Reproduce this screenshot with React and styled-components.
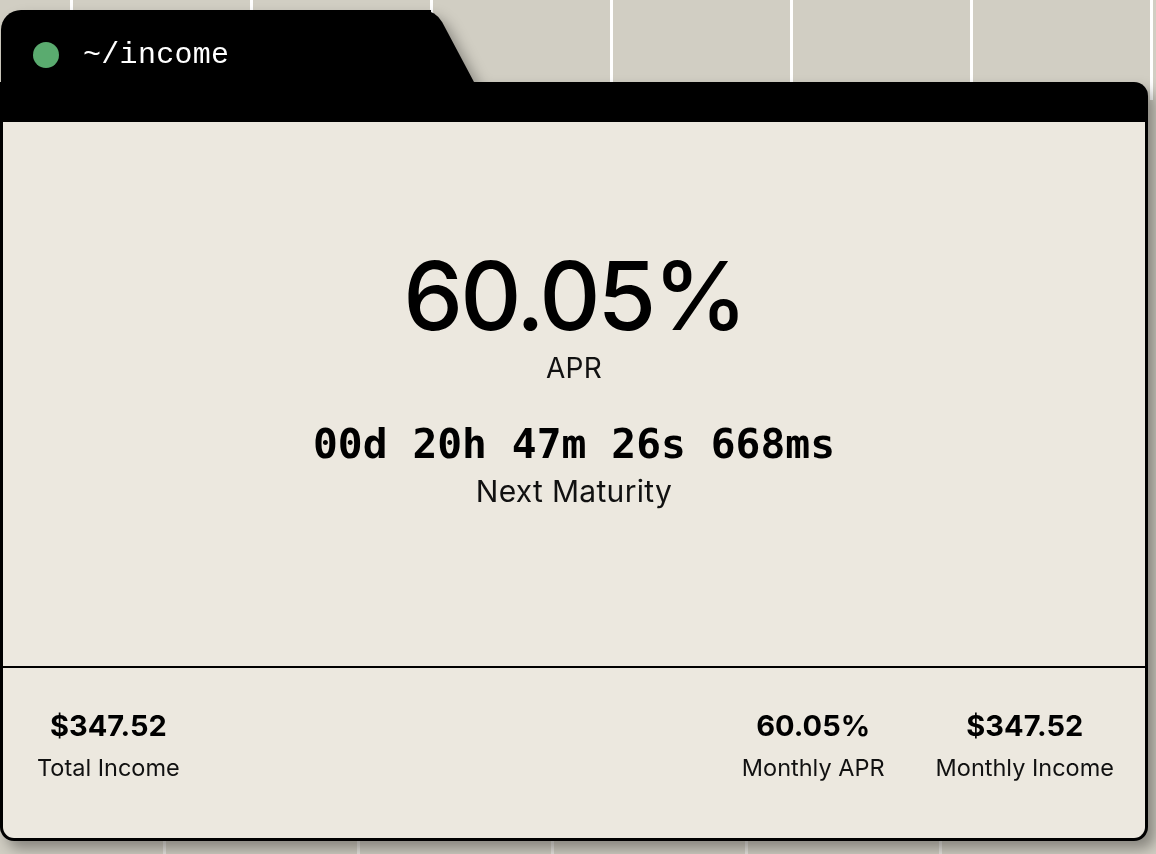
import React from "react";
import styled, { createGlobalStyle } from "styled-components";

const GlobalStyle = createGlobalStyle`
  html, body {
    margin: 0;
    padding: 0;
  }
  body {
    width: 1156px;
    height: 854px;
    overflow: hidden;
    background-color: #d1cec3;
    background-image:
      repeating-linear-gradient(90deg, transparent 0 70px, #ffffff 70px 73px, transparent 73px 180px),
      repeating-linear-gradient(90deg, transparent 0 163px, #e6e4de 163px 166px, transparent 166px 194px);
    background-size: 1156px 100px, 1156px 60px;
    background-position: 0 0, -194px 800px;
    background-repeat: no-repeat;
  }
`;

const Page = styled.div`
  padding-top: 10px;
`;

const Window = styled.div`
  width: 1148px;
  filter: drop-shadow(7px 8px 7px rgba(0, 0, 0, 0.35));
`;

const Tab = styled.div`
  position: relative;
  width: 430px;
  height: 72px;
  margin-left: 1px;
  background: #000;
  border-top-left-radius: 20px;
  display: flex;
  align-items: center;
  gap: 24px;
  padding-left: 32px;
  padding-top: 18px;
  box-sizing: border-box;

  &::after {
    content: "";
    position: absolute;
    left: 400px;
    bottom: 0;
    width: 73px;
    height: 100%;
    background: #000;
    border-top-right-radius: 12px;
    transform: skewX(28deg);
    transform-origin: bottom left;
  }
`;

const Dot = styled.span`
  width: 26px;
  height: 26px;
  border-radius: 50%;
  background: #5aab6f;
  flex-shrink: 0;
`;

const Path = styled.span`
  font-family: "Liberation Mono", "DejaVu Sans Mono", monospace;
  font-size: 30px;
  color: #fff;
  letter-spacing: 0.3px;
`;

const HeaderBar = styled.div`
  height: 40px;
  background: #000;
  border-top-right-radius: 14px;
`;

const Body = styled.div`
  background: #ece8df;
  border: 3px solid #000;
  border-top: none;
  border-radius: 0 0 14px 14px;
  display: flex;
  flex-direction: column;
`;

const Hero = styled.div`
  height: 546px;
  display: flex;
  flex-direction: column;
  align-items: center;
  padding-top: 118px;
  box-sizing: border-box;
  border-bottom: 2px solid #000;
`;

const BigValue = styled.div`
  font-family: "Inter", "Noto Sans", sans-serif;
  font-size: 95px;
  font-weight: 500;
  letter-spacing: -3px;
  line-height: 112px;
  color: #000;
`;

const Label = styled.div`
  font-family: "Inter", "Noto Sans", sans-serif;
  font-size: ${(p) => p.size || 28}px;
  font-weight: 400;
  color: #111;
  line-height: 1.2;
  letter-spacing: 0.3px;
  margin-top: ${(p) => p.top || 0}px;
`;

const Countdown = styled.div`
  font-family: "DejaVu Sans Mono", "Liberation Mono", monospace;
  font-size: 41.3px;
  font-weight: 700;
  color: #000;
  margin-top: 34px;
  line-height: 1.2;
  white-space: pre;
`;

const Footer = styled.div`
  height: 170px;
  display: flex;
  align-items: center;
  justify-content: space-between;
  padding: 0 31px 16px 34px;
  box-sizing: border-box;
`;

const StatGroup = styled.div`
  display: flex;
  gap: 51px;
`;

const Stat = styled.div`
  display: flex;
  flex-direction: column;
  align-items: center;
  gap: 10px;
`;

const StatValue = styled.div`
  font-family: "Inter", "Noto Sans", sans-serif;
  font-size: 29px;
  font-weight: 700;
  color: #000;
`;

const StatLabel = styled.div`
  font-family: "Inter", "Noto Sans", sans-serif;
  font-size: 23.5px;
  color: #111;
`;

const stats = [
  { value: "60.05%", label: "Monthly APR" },
  { value: "$347.52", label: "Monthly Income" },
];

export default function App() {
  return (
    <Page>
      <GlobalStyle />
      <Window>
        <Tab>
          <Dot />
          <Path>~/income</Path>
        </Tab>
        <HeaderBar />
        <Body>
          <Hero>
            <BigValue>60.05%</BigValue>
            <Label>APR</Label>
            <Countdown>00d 20h 47m 26s 668ms</Countdown>
            <Label top={4} size={30}>Next Maturity</Label>
          </Hero>
          <Footer>
            <Stat>
              <StatValue>$347.52</StatValue>
              <StatLabel>Total Income</StatLabel>
            </Stat>
            <StatGroup>
              {stats.map((s) => (
                <Stat key={s.label}>
                  <StatValue>{s.value}</StatValue>
                  <StatLabel>{s.label}</StatLabel>
                </Stat>
              ))}
            </StatGroup>
          </Footer>
        </Body>
      </Window>
    </Page>
  );
}
